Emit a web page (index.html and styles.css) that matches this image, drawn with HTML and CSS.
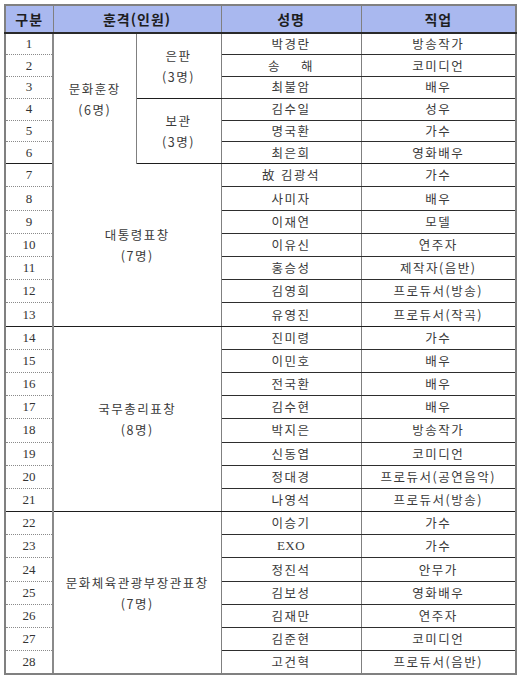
FILE: index.html
```html
<!DOCTYPE html>
<html lang="ko">
<head>
<meta charset="utf-8">
<link rel="stylesheet" href="styles.css">
</head>
<body>
<table class="awards">
  <colgroup>
    <col class="c-num"><col class="c-grp"><col class="c-sub"><col class="c-name"><col class="c-job">
  </colgroup>
  <thead>
    <tr class="head">
      <th>구분</th>
      <th colspan="2">훈격(인원)</th>
      <th>성명</th>
      <th>직업</th>
    </tr>
  </thead>
  <tbody>
    <tr class="short"><td class="num">1</td><td class="grp" rowspan="6">문화훈장<br>(6명)</td><td class="sub end" rowspan="3">은판<br>(3명)</td><td class="name">박경란</td><td class="job">방송작가</td></tr>
    <tr class="short"><td class="num">2</td><td class="name">송&nbsp;&nbsp;&nbsp;&nbsp;해</td><td class="job">코미디언</td></tr>
    <tr class="short"><td class="num">3</td><td class="name">최불암</td><td class="job">배우</td></tr>
    <tr class="short"><td class="num">4</td><td class="sub end" rowspan="3">보관<br>(3명)</td><td class="name">김수일</td><td class="job">성우</td></tr>
    <tr class="short"><td class="num">5</td><td class="name">명국환</td><td class="job">가수</td></tr>
    <tr class="short end"><td class="num">6</td><td class="name">최은희</td><td class="job">영화배우</td></tr>

    <tr><td class="num">7</td><td class="grp end" colspan="2" rowspan="7">대통령표창<br>(7명)</td><td class="name">故 김광석</td><td class="job">가수</td></tr>
    <tr><td class="num">8</td><td class="name">사미자</td><td class="job">배우</td></tr>
    <tr><td class="num">9</td><td class="name">이재연</td><td class="job">모델</td></tr>
    <tr><td class="num">10</td><td class="name">이유신</td><td class="job">연주자</td></tr>
    <tr><td class="num">11</td><td class="name">홍승성</td><td class="job">제작자(음반)</td></tr>
    <tr><td class="num">12</td><td class="name">김영희</td><td class="job">프로듀서(방송)</td></tr>
    <tr class="end"><td class="num">13</td><td class="name">유영진</td><td class="job">프로듀서(작곡)</td></tr>

    <tr><td class="num">14</td><td class="grp end" colspan="2" rowspan="8">국무총리표창<br>(8명)</td><td class="name">진미령</td><td class="job">가수</td></tr>
    <tr><td class="num">15</td><td class="name">이민호</td><td class="job">배우</td></tr>
    <tr><td class="num">16</td><td class="name">전국환</td><td class="job">배우</td></tr>
    <tr><td class="num">17</td><td class="name">김수현</td><td class="job">배우</td></tr>
    <tr><td class="num">18</td><td class="name">박지은</td><td class="job">방송작가</td></tr>
    <tr><td class="num">19</td><td class="name">신동엽</td><td class="job">코미디언</td></tr>
    <tr><td class="num">20</td><td class="name">정대경</td><td class="job">프로듀서(공연음악)</td></tr>
    <tr class="end"><td class="num">21</td><td class="name">나영석</td><td class="job">프로듀서(방송)</td></tr>

    <tr><td class="num">22</td><td class="grp" colspan="2" rowspan="7">문화체육관광부장관표창<br>(7명)</td><td class="name">이승기</td><td class="job">가수</td></tr>
    <tr><td class="num">23</td><td class="name latin">EXO</td><td class="job">가수</td></tr>
    <tr><td class="num">24</td><td class="name">정진석</td><td class="job">안무가</td></tr>
    <tr><td class="num">25</td><td class="name">김보성</td><td class="job">영화배우</td></tr>
    <tr><td class="num">26</td><td class="name">김재만</td><td class="job">연주자</td></tr>
    <tr><td class="num">27</td><td class="name">김준현</td><td class="job">코미디언</td></tr>
    <tr class="last"><td class="num">28</td><td class="name">고건혁</td><td class="job">프로듀서(음반)</td></tr>
  </tbody>
</table>
</body>
</html>
```

FILE: styles.css
```css
html, body {
  margin: 0;
  padding: 0;
  background: #ffffff;
}

.awards {
  margin: 4px 0 0 4px;
  width: 511px;
  table-layout: fixed;
  border-collapse: collapse;
  border: 2px solid #808080;
  font-family: "Noto Sans CJK KR", "Liberation Sans", sans-serif;
  font-size: 12.5px;
  color: #3a3a3a;
}

.c-num { width: 48px; }
.c-grp { width: 83px; }
.c-sub { width: 85px; }
.c-name { width: 140px; }
.c-job { width: 155px; }

.head th {
  height: 26px;
  padding: 0;
  background: #a9b8ef;
  color: #1e1e1e;
  font-size: 14px;
  font-weight: bold;
  letter-spacing: 1px;
  border-left: 1px solid #808080;
  border-right: 1px solid #808080;
  border-bottom: 2px solid #2a2a2a;
  text-align: center;
  vertical-align: middle;
}

td {
  padding: 0;
  text-align: center;
  vertical-align: middle;
  line-height: 20px;
  letter-spacing: 1.5px;
}

tbody tr { height: 23.2px; }
tbody tr.short { height: 21.8px; }

.num {
  font-family: "Liberation Serif", "DejaVu Serif", serif;
  font-size: 13px;
  letter-spacing: 0;
  color: #333;
  border-right: 2px solid #8a8a8a;
  border-bottom: 1px dotted #8a8a8a;
}

.grp, .sub {
  border-left: 1px solid #808080;
  border-right: 1px solid #808080;
  line-height: 21px;
}

.name, .job {
  border-bottom: 1px solid #2e2e2e;
}

.name {
  border-right: 1px solid #808080;
}

.latin {
  font-family: "Liberation Serif", "DejaVu Serif", serif;
  font-size: 13px;
  letter-spacing: 0.5px;
}

tr.end td,
td.end {
  border-bottom: 1px solid #1e1e1e;
}

tr.last td {
  border-bottom: 2px solid #808080;
}
```
